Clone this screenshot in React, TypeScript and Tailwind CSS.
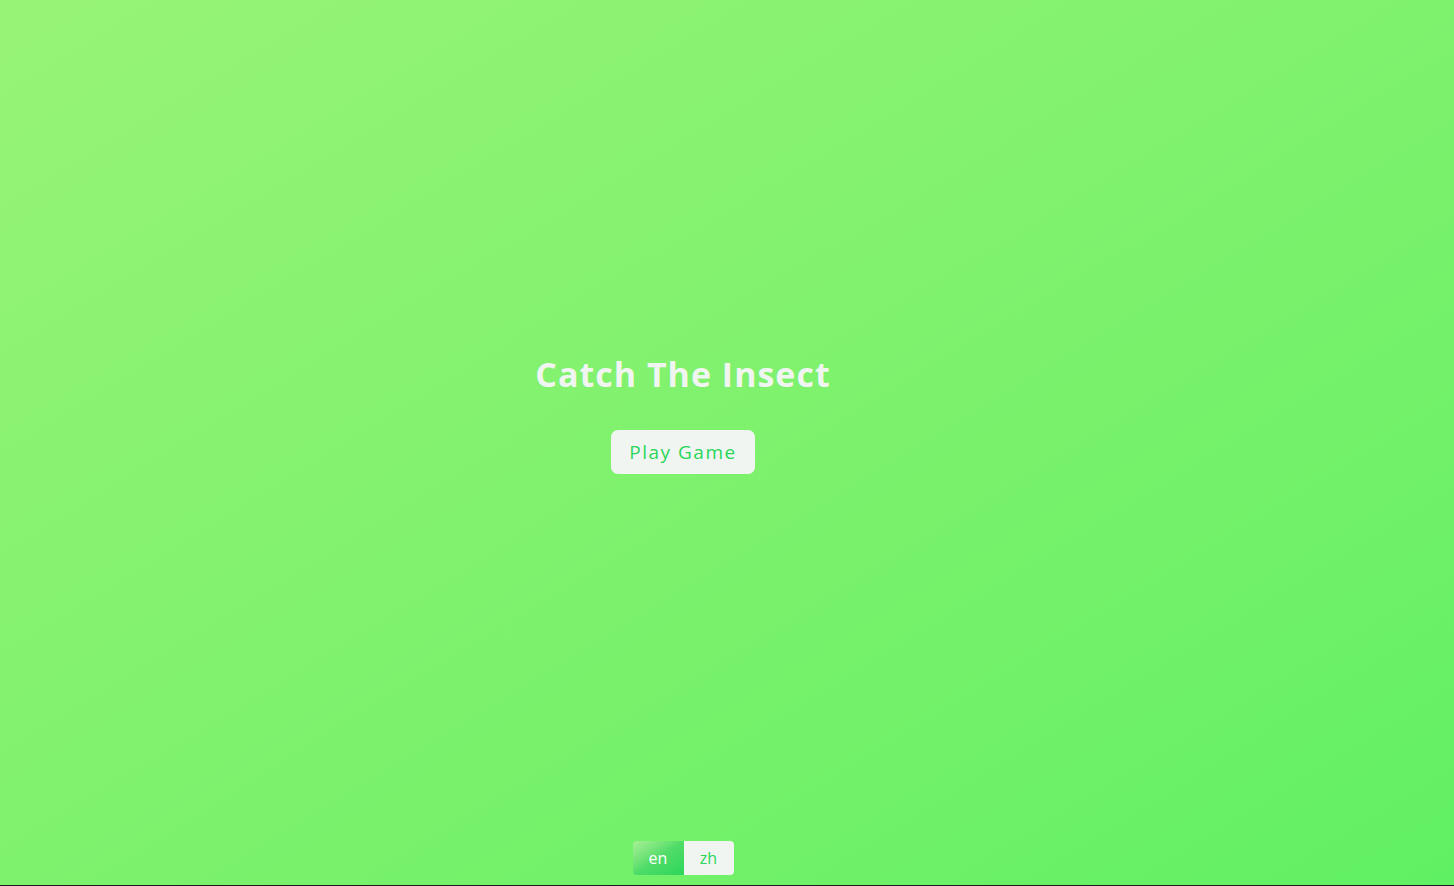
import React from "react";

export default function App() {
  return (
    <div className="w-[1454px] h-[886px] bg-[#1b1b1b] overflow-hidden" style={{ fontFamily: '"Open Sans", "Noto Sans", sans-serif' }}>
      <div className="h-[885px] w-full bg-gradient-to-br from-[#97f376] to-[#60f064] flex flex-col">
        <div className="w-[1366px] flex flex-col items-center pt-[352px]">
          <h1 className="text-[34px] font-bold text-[#f1f5f1] tracking-[1px] leading-[44px]">Catch The Insect</h1>
          <button className="mt-[34px] w-[144px] h-[44px] rounded-[7px] bg-[#f1f5f1] text-[#2ad65a] text-[19px] tracking-[1.5px]">Play Game</button>
        </div>
        <div className="flex-1" />
        <div className="w-[1366px] flex justify-center pb-[10px]">
          <div className="flex h-[34px] rounded-[4px] overflow-hidden">
            <div className="w-[51px] flex items-center justify-center text-white text-[16px] bg-gradient-to-br from-[#a6f096] via-[#4fdc68] to-[#2ad65a]">en</div>
            <div className="w-[50px] flex items-center justify-center text-[#2ad65a] text-[16px] bg-[#f1f5f1]">zh</div>
          </div>
        </div>
      </div>
    </div>
  );
}
